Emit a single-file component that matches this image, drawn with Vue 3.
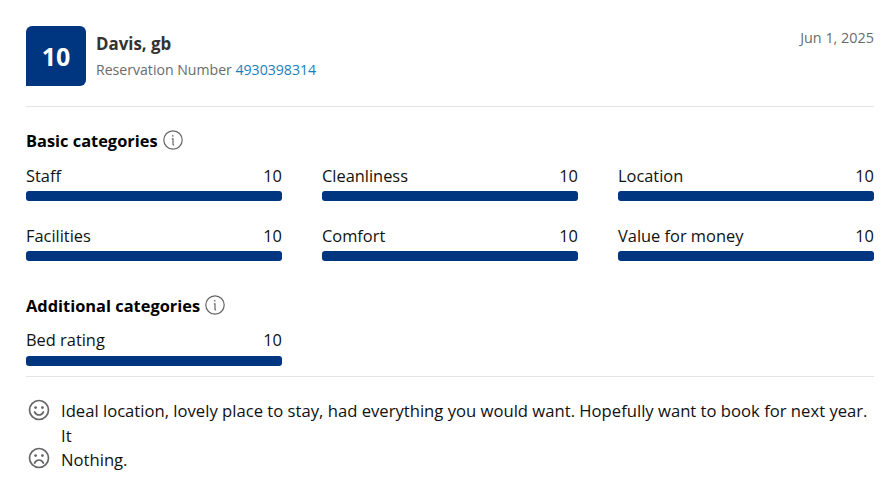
<script setup>
const basic = [
  { name: "Staff", score: 10 },
  { name: "Cleanliness", score: 10 },
  { name: "Location", score: 10 },
  { name: "Facilities", score: 10 },
  { name: "Comfort", score: 10 },
  { name: "Value for money", score: 10 },
];
const additional = [{ name: "Bed rating", score: 10 }];
</script>

<template>
  <div class="review">
    <header class="head">
      <div class="badge">10</div>
      <div class="who">
        <div class="name">Davis, gb</div>
        <div class="resv">Reservation Number <a class="num">4930398314</a></div>
      </div>
      <div class="date">Jun 1, 2025</div>
    </header>

    <section class="cats basic">
      <h3 class="title">
        Basic categories
        <svg class="info" viewBox="0 0 20 20" width="20" height="20">
          <circle cx="10" cy="10" r="9.2" fill="none" stroke="#666" stroke-width="1.2" />
          <circle cx="9.8" cy="5.9" r="0.8" fill="#666" />
          <path d="M8.8 8.8h1.2v5.4c0 .6.4.9 1.1.7" fill="none" stroke="#666" stroke-width="1.2" />
        </svg>
      </h3>
      <div class="grid">
        <div v-for="c in basic" :key="c.name" class="cat">
          <div class="row"><span>{{ c.name }}</span><span>{{ c.score }}</span></div>
          <div class="bar"></div>
        </div>
      </div>
    </section>

    <section class="cats extra">
      <h3 class="title">
        Additional categories
        <svg class="info" viewBox="0 0 20 20" width="20" height="20">
          <circle cx="10" cy="10" r="9.2" fill="none" stroke="#666" stroke-width="1.2" />
          <circle cx="9.8" cy="5.9" r="0.8" fill="#666" />
          <path d="M8.8 8.8h1.2v5.4c0 .6.4.9 1.1.7" fill="none" stroke="#666" stroke-width="1.2" />
        </svg>
      </h3>
      <div class="grid">
        <div v-for="c in additional" :key="c.name" class="cat">
          <div class="row"><span>{{ c.name }}</span><span>{{ c.score }}</span></div>
          <div class="bar"></div>
        </div>
      </div>
    </section>

    <section class="comments">
      <div class="comment">
        <svg class="face" viewBox="0 0 22 22" width="22" height="22">
          <circle cx="11" cy="11" r="9.5" fill="none" stroke="#666" stroke-width="1.7" />
          <circle cx="7.6" cy="8.6" r="1.4" fill="#666" />
          <circle cx="14.4" cy="8.6" r="1.4" fill="#666" />
          <path d="M6.6 13c1 2 2.6 3 4.4 3s3.400-1 4.400-3" fill="none" stroke="#666" stroke-width="1.7" stroke-linecap="round" />
        </svg>
        <p>Ideal location, lovely place to stay, had everything you would want. Hopefully want to book for next year. It</p>
      </div>
      <div class="comment">
        <svg class="face" viewBox="0 0 22 22" width="22" height="22">
          <circle cx="11" cy="11" r="9.5" fill="none" stroke="#666" stroke-width="1.7" />
          <circle cx="7.6" cy="8.6" r="1.4" fill="#666" />
          <circle cx="14.4" cy="8.6" r="1.4" fill="#666" />
          <path d="M6.6 16c1-2 2.600-3 4.400-3s3.400 1 4.400 3" fill="none" stroke="#666" stroke-width="1.7" stroke-linecap="round" />
        </svg>
        <p>Nothing.</p>
      </div>
    </section>
  </div>
</template>

<style scoped>
.review {
  padding: 26px 20px 0 26px;
  font-family: "Open Sans", "Noto Sans", sans-serif;
  color: #111;
}

.head {
  display: flex;
  align-items: flex-start;
  padding-bottom: 20px;
  border-bottom: 1px solid #e4e4e4;
}

.badge {
  width: 60px;
  height: 60px;
  display: flex;
  align-items: center;
  justify-content: center;
  background: #003580;
  border-radius: 6px 6px 6px 0;
  color: #fff;
  font-size: 25px;
  font-weight: 700;
}

.who {
  margin-left: 10px;
  flex: 1;
}

.name {
  margin-top: 6px;
  font-size: 16.9px;
  line-height: 24px;
  font-weight: 700;
  color: #333;
}

.resv {
  margin-top: 4px;
  font-size: 14.1px;
  line-height: 20px;
  color: #6b6b6b;
}

.num {
  color: #1a7ebf;
}

.date {
  padding-top: 1px;
  font-size: 14.4px;
  line-height: 22px;
  color: #6b6b6b;
}

.cats.basic {
  margin-top: 21px;
}

.cats.extra {
  margin-top: 32px;
  padding-bottom: 10px;
  border-bottom: 1px solid #e4e4e4;
}

.title {
  display: flex;
  align-items: center;
  gap: 5px;
  margin: 0;
  height: 24px;
  font-size: 16.4px;
  font-weight: 700;
  color: #000;
}

.grid {
  display: grid;
  grid-template-columns: repeat(3, 256px);
  column-gap: 40px;
  row-gap: 24px;
  margin-top: 12px;
}

.basic .grid {
  margin-top: 13px;
}

.row {
  display: flex;
  justify-content: space-between;
  font-size: 16.4px;
  line-height: 22px;
  margin-bottom: 4px;
  color: #111;
}

.extra .row {
  margin-bottom: 5px;
}

.bar {
  height: 10px;
  background: #003580;
  border-radius: 3px;
}

.comments {
  margin-top: 22px;
}

.comment {
  display: flex;
  align-items: flex-start;
  gap: 11px;
  padding-left: 2px;
}

.comment p {
  margin: 0;
  font-size: 16.65px;
  line-height: 24.5px;
  color: #111;
}

.face {
  flex: none;
}

.comment + .comment .face {
  margin-top: -1px;
}
</style>
